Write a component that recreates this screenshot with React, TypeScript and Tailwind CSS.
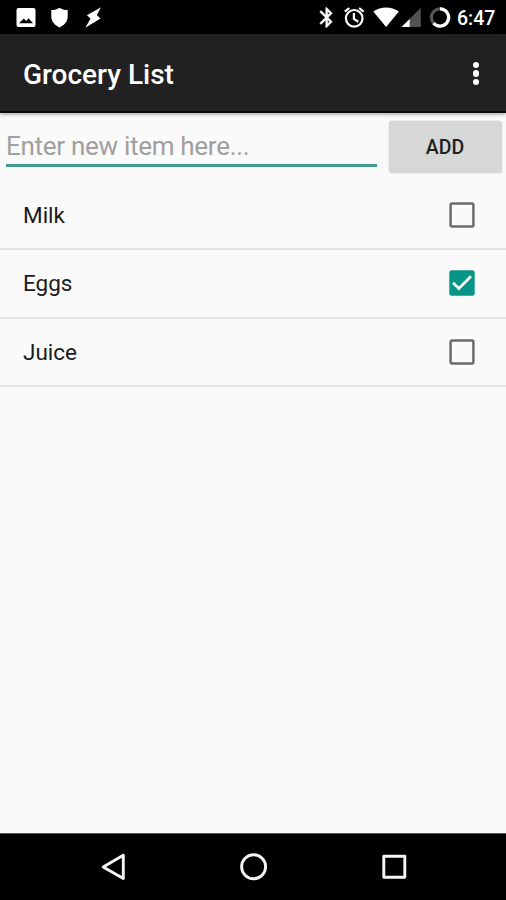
import { useState } from "react";

const initialItems = [
  { name: "Milk", done: false },
  { name: "Eggs", done: true },
  { name: "Juice", done: false },
];

function StatusBar() {
  return (
    <div className="flex h-[34px] shrink-0 items-start justify-between bg-black text-white">
      <svg width="130" height="34" viewBox="0 0 130 34" fill="currentColor">
        <path
          fillRule="evenodd"
          d="M18.500 8h15a2 2 0 0 1 2 2v15a2 2 0 0 1-2 2h-15a2 2 0 0 1-2-2V10a2 2 0 0 1 2-2zM19 23.300h14l-4.400-5.100-2.400 2.900-2.300-2.500z"
        />
        <path d="M59.500 7.700c2.600 1.800 5.200 2.400 8.200 2.300v6.600c0 5.200-3.600 8.800-8.200 10.900-4.600-2.100-8.200-5.700-8.200-10.900V10c3 .1 5.600-.5 8.200-2.300z" />
        <path d="M101 7.300 87 15.300l3.500 3.500-5.200 9L100.500 18.600l-3.700-3.500z" />
      </svg>
      <div className="flex">
        <svg width="147" height="34" viewBox="310 0 147 34" fill="currentColor">
          <path
            transform="translate(314.700 5.500)"
            d="M17.710 7.710 12 2h-1v7.590L6.410 5 5 6.410 10.590 12 5 17.590 6.410 19 11 14.410V22h1l5.710-5.710-4.300-4.290zM13 5.830l1.880 1.880L13 9.590zm1.880 10.460L13 18.170v-3.760z"
            stroke="currentColor"
            strokeWidth=".4"
          />
          <g fill="none" stroke="currentColor" strokeWidth="2.200">
            <circle cx="354.200" cy="18.300" r="8.300" />
            <path d="m344.800 11.700 4.500-3.700m14.300 3.700L359.100 8M353.900 13v6l4.400 2.700" />
          </g>
          <path d="M373.300 11.500c7.600-5.500 18-5.500 25.600 0L386.100 27z" />
          <path d="M420.800 7.800V27h-19.300z" fill="#515151" />
          <path d="M409.700 18.900V27h-8.200z" />
          <g fill="none" strokeWidth="3.200">
            <circle cx="440" cy="17.500" r="8.600" stroke="#555" />
            <path d="M440 8.900a8.600 8.600 0 1 1-6.400 14.300" stroke="currentColor" />
          </g>
        </svg>
        <span className="w-[49px] pt-[5px] text-[19.500px] leading-[28px] font-medium">6:47</span>
      </div>
    </div>
  );
}

function AppBar() {
  return (
    <header className="z-10 flex h-[78.500px] shrink-0 items-center justify-between border-b-2 border-[#0b0b0b] bg-[#212121] pr-[27px] pl-[23px] text-white shadow-[0_1px_4px_rgba(0,0,0,0.4)]">
      <h1 className="pt-1.5 text-[28px] leading-8 font-medium">Grocery List</h1>
      <button aria-label="More options" className="flex flex-col gap-[2px] pt-[2px]">
        <span className="size-[6.500px] rounded-full bg-white" />
        <span className="size-[6.500px] rounded-full bg-white" />
        <span className="size-[6.500px] rounded-full bg-white" />
      </button>
    </header>
  );
}

function Checkbox({ checked }: { checked: boolean }) {
  return (
    <svg width="26" height="26" viewBox="0 0 26 26" fill="none">
      {checked ? (
        <>
          <rect x=".3" y=".3" width="25.400" height="25.400" rx="2.500" fill="#079587" />
          <path d="m4 12.800 5.800 5.700L22 6.300" stroke="#fff" strokeWidth="2.700" />
        </>
      ) : (
        <rect x="1.600" y="1.600" width="22.800" height="22.800" rx="1.500" stroke="#6c6c6c" strokeWidth="2.500" />
      )}
    </svg>
  );
}

function NavBar() {
  return (
    <nav className="flex h-[67px] shrink-0 border-t border-[#555] bg-black">
      <svg width="506" height="66" viewBox="0 834 506 66" fill="none" stroke="#f5f5f5" strokeWidth="2.900" strokeLinejoin="round">
        <path d="M123.300 855.200v23.400L103.200 867z" />
        <circle cx="253.600" cy="866.700" r="12" />
        <rect x="383.800" y="856.200" width="21" height="21" />
      </svg>
    </nav>
  );
}

export default function App() {
  const [items, setItems] = useState(initialItems);
  const [text, setText] = useState("");

  const add = () => {
    if (!text.trim()) return;
    setItems([...items, { name: text, done: false }]);
    setText("");
  };

  const toggle = (index: number) =>
    setItems(items.map((item, i) => (i === index ? { ...item, done: !item.done } : item)));

  return (
    <div className="flex h-[900px] w-[506px] flex-col overflow-hidden bg-[#fafafa] font-[Roboto,sans-serif]">
      <StatusBar />
      <AppBar />
      <main className="flex flex-1 flex-col">
        <div className="flex h-[69px] items-start pr-1 pl-[6px]">
          <input
            value={text}
            onChange={(e) => setText(e.target.value)}
            placeholder="Enter new item here..."
            className="mt-[15px] h-[39px] w-[371px] border-b-3 border-[#439c92] pt-[1px] pb-[1px] text-[26px] leading-8 tracking-[-0.290px] text-[#212121] outline-none placeholder:text-[#a0a0a0]"
          />
          <button
            onClick={add}
            className="mt-[8.500px] ml-3 h-[52px] w-[113px] rounded-[3px] bg-[#d6d8d7] pt-[2px] pr-[1px] text-[19.500px] font-medium text-[#212121] shadow-[0_0_2px_rgba(0,0,0,0.18)]"
          >
            ADD
          </button>
        </div>
        <ul>
          {items.map((item, i) => (
            <li
              key={i}
              onClick={() => toggle(i)}
              className="flex h-[68.600px] items-center justify-between border-b-2 border-[#e2e2e2] pr-[31.500px] pl-[23px]"
            >
              <span className="text-[22.500px] leading-7 text-[#1c1c1c]">{item.name}</span>
              <Checkbox checked={item.done} />
            </li>
          ))}
        </ul>
      </main>
      <NavBar />
    </div>
  );
}
